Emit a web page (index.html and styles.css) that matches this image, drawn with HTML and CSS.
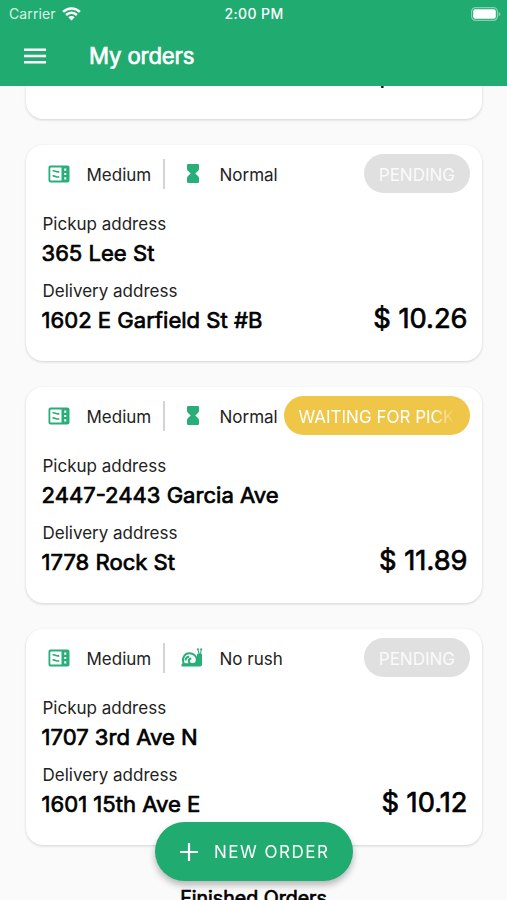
FILE: index.html
```html
<!DOCTYPE html>
<html lang="en">
<head>
<meta charset="utf-8">
<title>My orders</title>
<link rel="stylesheet" href="styles.css">
</head>
<body>
<svg class="defs" width="0" height="0" aria-hidden="true">
  <symbol id="box" viewBox="0 0 22 18">
    <path fill="currentColor" fill-rule="evenodd" d="M2.5 .5h17a2 2 0 0 1 2 2v13a2 2 0 0 1-2 2h-17a2 2 0 0 1-2-2v-13a2 2 0 0 1 2-2zM3 2.4a.7.7 0 0 0-.7.7v11.8c0 .4.3.7.7.7h10.5V2.4zM16.2 3.6v2.1h2.1V3.6zm0 4.4v2h2.1V8zm0 4.3v2.1h2.1v-2.1z"/>
    <path fill="none" stroke="currentColor" stroke-width="1.7" d="M4.6 6c1.800-1.200 3.800 1.700 6.600.6M4.600 11.200c1.800-1.200 3.800 1.700 6.600.6"/>
  </symbol>
  <symbol id="hourglass" viewBox="0 0 12 19">
    <path fill="currentColor" d="M1.2 0h9.6Q12 0 12 1.2v3.5q0 1.2-.8 2L8.3 9.5l2.9 2.8q.8.8.8 2v3.5q0 1.2-1.200 1.200H1.200Q0 19 0 17.800v-3.500q0-1.200.8-2l2.900-2.800L.8 6.700Q0 5.900 0 4.700V1.200Q0 0 1.200 0z"/>
  </symbol>
  <symbol id="snail" viewBox="0 0 22 19">
    <path fill="currentColor" d="M.5 18.500v-2q0-1 1.200-1.200L15 15l1-8.200q.2-1.300 1.300-1.300h2.400q1.300 0 1.300 1.300v9.700q0 2-2 2z"/>
    <path fill="none" stroke="currentColor" stroke-width="2" d="M3.200 16.200C.2 11.400 3 5.300 8.400 5.300c4.600 0 7.400 3.300 7.400 6.500 0 2.700-1.700 4.400-4.100 4.400-2.400 0-3.900-1.400-3.900-3.200 0-1.500 1-2.600 2.500-2.600M4.500 12.500c.2-2.300 1.800-3.700 3.700-3.700"/>
    <path fill="none" stroke="currentColor" stroke-width="1.100" d="M18.200 6 16.800 1.200M19.600 6l.6-5"/>
    <circle cx="16.900" cy="1.300" r="1" fill="currentColor"/><circle cx="20.200" cy="1.200" r="1" fill="currentColor"/>
  </symbol>
</svg>

<header class="top">
  <div class="status">
    <div class="carrier">Carrier
      <svg width="19" height="14" viewBox="0 0 19 14"><g fill="none" stroke="#fff" stroke-width="2.500"><path d="M1.100 4.900a12 12 0 0 1 16.800 0M4.100 8a7.700 7.700 0 0 1 10.800 0"/></g><path fill="#fff" d="M6.300 10.200a4.600 4.600 0 0 1 6.400 0L9.500 13.500z"/></svg>
    </div>
    <div class="clock">2:00 PM</div>
    <svg class="battery" width="30" height="14" viewBox="0 0 30 14"><rect x=".6" y=".6" width="25.800" height="12.800" rx="4" fill="none" stroke="#fff" stroke-opacity=".45" stroke-width="1.200"/><rect x="2.200" y="2.300" width="22.600" height="9.400" rx="2" fill="#fff"/><path d="M27.700 4.700q3.200 2.300 0 4.600z" fill="#fff" fill-opacity=".5"/></svg>
  </div>
  <div class="bar">
    <svg width="22" height="16" viewBox="0 0 22 16"><path stroke="#fff" stroke-width="2.500" d="M0 1.700h22M0 8h22M0 14.300h22"/></svg>
    <h1>My orders</h1>
  </div>
</header>

<main class="list">
  <article class="card">
    <div class="foot"><p class="price">$ 10.50</p></div>
  </article>

  <article class="card">
    <div class="meta">
      <svg class="icon box"><use href="#box"/></svg><span class="size">Medium</span>
      <svg class="icon glass"><use href="#hourglass"/></svg><span class="speed">Normal</span>
      <span class="chip">PENDING</span>
    </div>
    <p class="label">Pickup address</p>
    <p class="address">365 Lee St</p>
    <p class="label">Delivery address</p>
    <div class="foot"><p class="address">1602 E Garfield St #B</p><p class="price">$ 10.26</p></div>
  </article>

  <article class="card">
    <div class="meta">
      <svg class="icon box"><use href="#box"/></svg><span class="size">Medium</span>
      <svg class="icon glass"><use href="#hourglass"/></svg><span class="speed">Normal</span>
      <span class="chip waiting"><span class="fade">WAITING FOR PICKUP</span></span>
    </div>
    <p class="label">Pickup address</p>
    <p class="address">2447-2443 Garcia Ave</p>
    <p class="label">Delivery address</p>
    <div class="foot"><p class="address">1778 Rock St</p><p class="price">$ 11.89</p></div>
  </article>

  <article class="card">
    <div class="meta">
      <svg class="icon box"><use href="#box"/></svg><span class="size">Medium</span>
      <svg class="icon snail"><use href="#snail"/></svg><span class="speed">No rush</span>
      <span class="chip">PENDING</span>
    </div>
    <p class="label">Pickup address</p>
    <p class="address">1707 3rd Ave N</p>
    <p class="label">Delivery address</p>
    <div class="foot"><p class="address">1601 15th Ave E</p><p class="price">$ 10.12</p></div>
  </article>

  <h2>Finished Orders</h2>
</main>

<button class="fab" type="button">
  <svg width="18" height="18" viewBox="0 0 18 18"><path stroke="#fff" stroke-width="2.200" d="M9 0v18M0 9h18"/></svg>
  <span>NEW ORDER</span>
</button>
</body>
</html>
```
FILE: styles.css
```css
* { box-sizing: border-box; margin: 0; padding: 0; }

body {
  height: 900px;
  display: flex;
  flex-direction: column;
  overflow: hidden;
  background: #fafafa;
  color: #000;
  font-family: Inter, "Liberation Sans", sans-serif;
  white-space: nowrap;
}

.defs { position: absolute; }

.top {
  flex: none;
  height: 86px;
  background: #20ab70;
  color: #fff;
}

.status {
  display: grid;
  grid-template-columns: 1fr auto 1fr;
  align-items: center;
  height: 27px;
  padding: 0 6px 0 7px;
  font-size: 14px;
}

.carrier {
  display: flex;
  align-items: center;
  gap: 6px;
  padding-left: 2px;
  letter-spacing: 0.1px;
  color: #d9f5e7;
}

.clock { font-weight: 500; letter-spacing: 0.4px; }
.battery { justify-self: end; }

.bar {
  display: flex;
  align-items: center;
  gap: 43px;
  height: 58px;
  padding-left: 24px;
}

/* headings use the regular cut, thickened by a thin outline */
h1, h2, .address, .price {
  font-weight: 400;
  -webkit-text-stroke: 0.7px currentColor;
}

h1 { padding-bottom: 2px; font-size: 22.2px; letter-spacing: -0.15px; }

.list {
  flex: 1;
  min-height: 0;
  overflow: hidden;
  display: flex;
  flex-direction: column;
  align-items: center;
}

.card {
  flex: none;
  display: flex;
  flex-direction: column;
  width: 456px;
  height: 216px;
  margin-bottom: 26px;
  padding: 8px 12px 0 16px;
  border-radius: 17px;
  background: #fff;
  box-shadow: 0 1px 3px rgba(0, 0, 0, 0.16);
}

/* the list is scrolled part-way through its first card */
.card:first-child { margin-top: -183px; padding-top: 157px; }

.meta {
  display: flex;
  align-items: center;
  height: 41px;
  margin-bottom: 18px;
  font-size: 17px;
  color: #222;
}

.icon { flex: none; color: #27ae79; }
.box { width: 22px; height: 18px; margin-left: 6px; }
.glass { width: 12px; height: 19px; margin: 0 21px 0 22px; }
.snail { width: 22px; height: 19px; margin: 0 17px 0 16px; }

.size {
  flex: none;
  width: 79px;
  margin-left: 16px;
  padding-left: 1px;
  height: 30px;
  line-height: 32px;
  border-right: 2px solid #d4d4d4;
}

.speed { height: 30px; line-height: 32px; }

.chip {
  height: 39px;
  margin-left: auto;
  padding: 0 14.5px;
  border-radius: 20px;
  background: #e0e0e0;
  color: #fafafa;
  line-height: 42px;
}

.waiting { flex: none; width: 186px; padding-left: 15px; background: #f0c648; color: #fff; }

.fade {
  display: block;
  overflow: hidden;
  -webkit-mask-image: linear-gradient(to right, #000 86%, transparent);
  mask-image: linear-gradient(to right, #000 86%, transparent);
}

.label { height: 24px; padding-left: 1px; font-size: 17px; line-height: 24px; color: #222; }
.address { height: 43px; font-size: 22.1px; line-height: 34px; }

.foot { display: flex; justify-content: space-between; }

.price {
  margin-left: auto;
  padding-right: 2px;
  font-size: 27.3px;
  line-height: 32px;
}

h2 { flex: none; margin-top: 15px; font-size: 19.6px; line-height: 25px; }

.fab {
  position: fixed;
  left: 155px;
  top: 822px;
  display: flex;
  align-items: center;
  gap: 16px;
  width: 198px;
  height: 59px;
  padding-left: 25px;
  border: 0;
  border-radius: 30px;
  background: #20ab70;
  color: #fff;
  font: 17px Inter, "Liberation Sans", sans-serif;
  letter-spacing: 1.5px;
  box-shadow: 0 4px 7px rgba(0, 0, 0, 0.28);
}
```
